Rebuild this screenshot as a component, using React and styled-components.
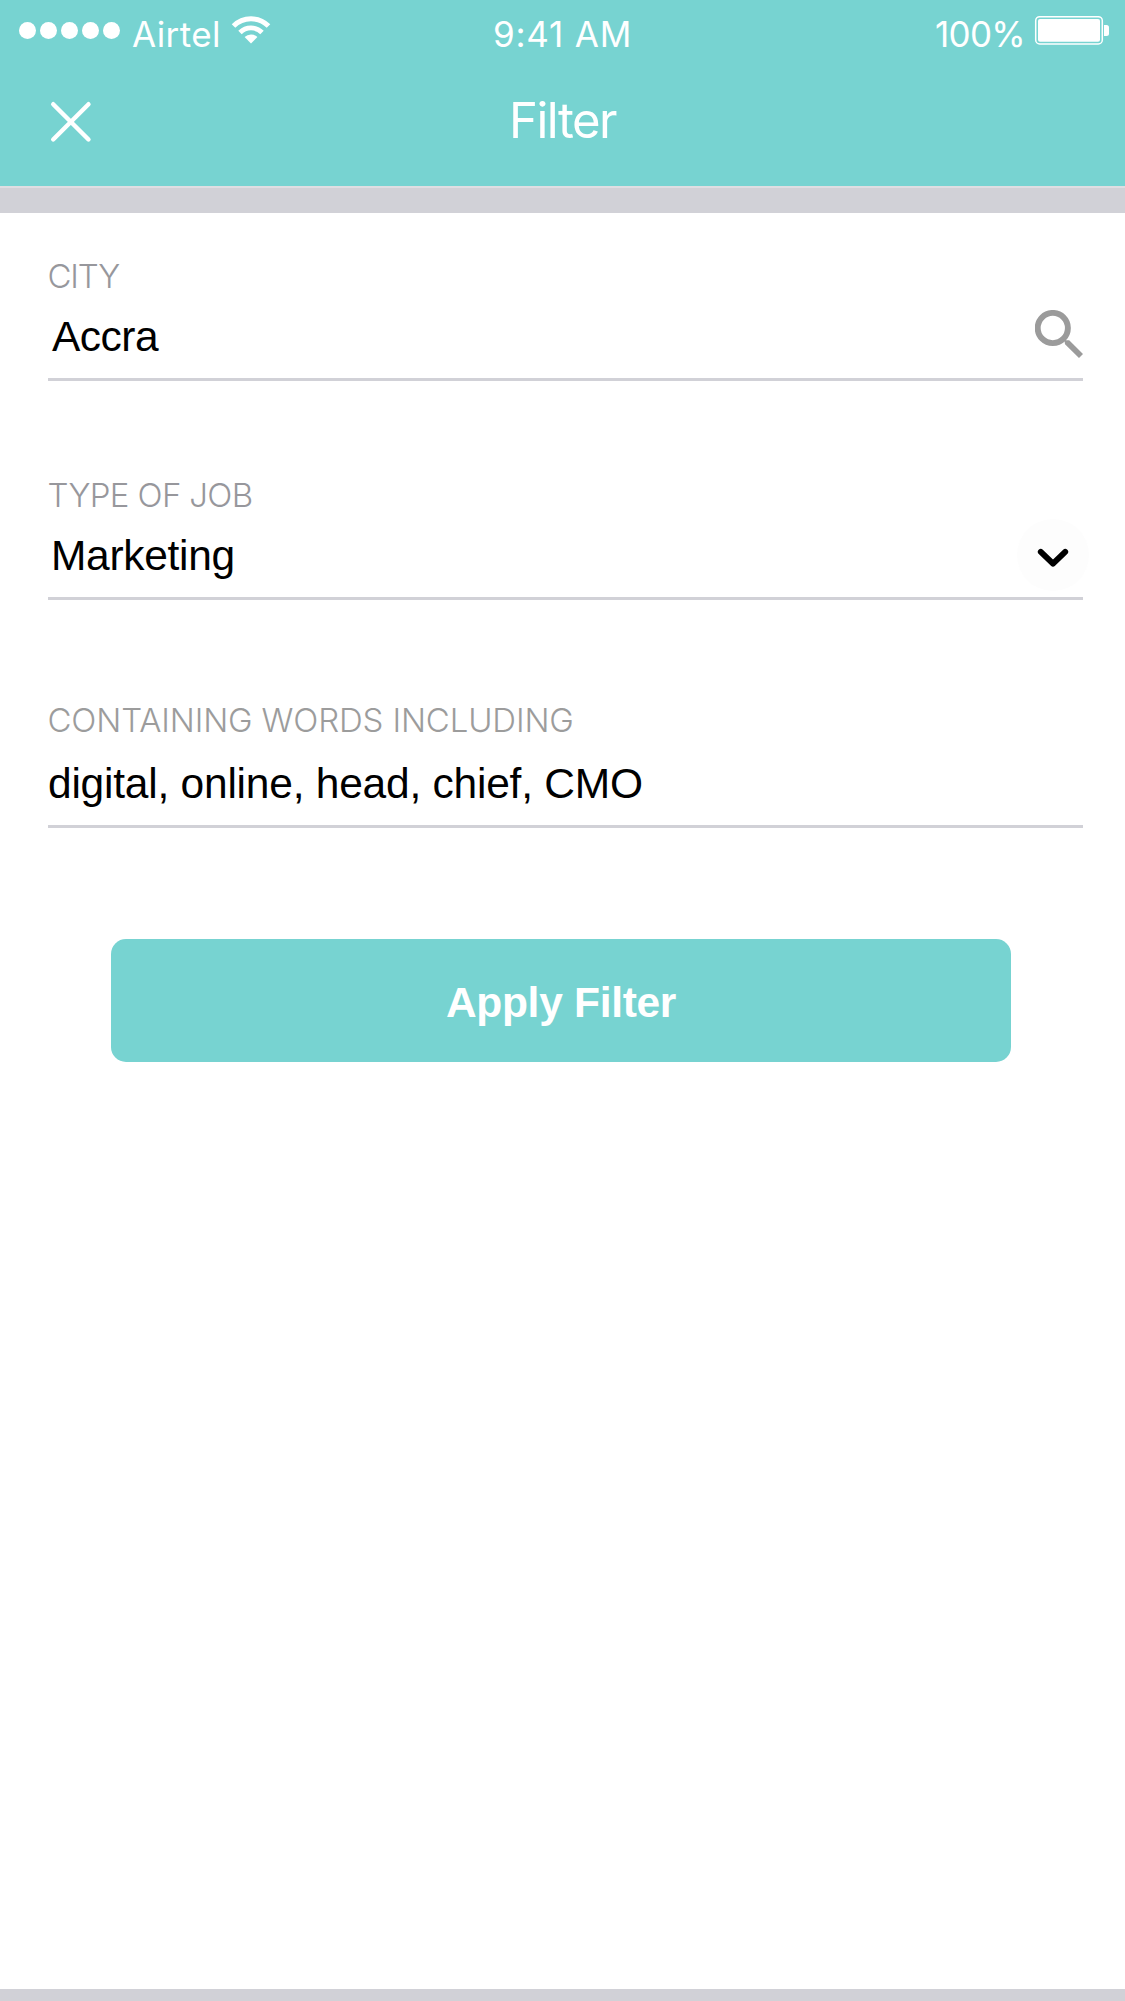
import React from "react";
import styled, { createGlobalStyle } from "styled-components";

const TEAL = "#77d3d1";
const GREY = "#d1d1d7";

const GlobalStyle = createGlobalStyle`
  * { box-sizing: border-box; }
  body { margin: 0; background: #fff; }
`;

const Screen = styled.div`
  width: 1125px;
  height: 2001px;
  display: flex;
  flex-direction: column;
  background: #fff;
  border-bottom: 12px solid ${GREY};
  overflow: hidden;
  font-family: "Liberation Sans", Arial, sans-serif;
`;

const Header = styled.header`
  height: 186px;
  flex: none;
  background: ${TEAL};
  color: #fff;
  font-family: Inter, Roboto, sans-serif;
`;

const StatusBar = styled.div`
  display: grid;
  grid-template-columns: 1fr auto 1fr;
  height: 68px;
  padding: 12px 16px 0;
`;

const StatusGroup = styled.div`
  display: flex;
  align-items: flex-start;
  justify-content: ${(p) => (p.$end ? "flex-end" : "flex-start")};
`;

const StatusText = styled.span`
  font-size: 35px;
  line-height: 44px;
  font-weight: 400;
  white-space: pre;
  letter-spacing: ${(p) => p.$spacing || 0}px;
`;

const Dots = styled.div`
  display: flex;
  gap: 4px;
  padding-top: 10px;
  margin: 0 12px 0 3px;
`;

const Dot = styled.i`
  width: 17px;
  height: 17px;
  border-radius: 50%;
  background: #fff;
`;

const WifiIcon = styled.svg`
  display: block;
  margin: 3px 0 0 10px;
`;

const BatteryIcon = styled.svg`
  display: block;
  margin: 3px 0 0 9px;
`;

const TitleBar = styled.div`
  display: grid;
  grid-template-columns: 1fr auto 1fr;
  height: 118px;
  padding: 23px 48px 0;
`;

const Title = styled.h1`
  margin: 0;
  font-size: 49px;
  line-height: 60px;
  font-weight: 400;
  letter-spacing: -1.5px;
`;

const CloseButton = styled.button`
  display: flex;
  align-items: flex-start;
  justify-content: flex-start;
  border: 0;
  background: none;
  padding: 10px 0 0 1px;
  width: 60px;
  height: 60px;
`;

const Divider = styled.div`
  height: 27px;
  flex: none;
  background: ${GREY};
  border-top: 2px solid #dedee2;
`;

const Form = styled.main`
  display: flex;
  flex-direction: column;
  padding: 43px 42px 0 48px;
`;

const Field = styled.div`
  height: ${(p) => p.$height}px;
  margin-bottom: ${(p) => p.$after}px;
  display: flex;
  flex-direction: column;
  justify-content: space-between;
  border-bottom: 3px solid ${GREY};
`;

const Label = styled.label`
  margin-left: -0.5px;
  font-family: Inter, Roboto, sans-serif;
  font-size: 33px;
  line-height: 40px;
  font-weight: 300;
  color: ${(p) => p.$color || "#97979c"};
  letter-spacing: ${(p) => p.$spacing}px;
  white-space: pre;
`;

const ValueRow = styled.div`
  display: flex;
  justify-content: space-between;
  height: 67px;
  padding-left: ${(p) => p.$indent}px;
`;

const Value = styled.span`
  padding-top: 1px;
  font-size: 42.5px;
  line-height: 50px;
  color: #000;
  letter-spacing: ${(p) => p.$spacing}px;
  white-space: pre;
`;

const SearchIcon = styled.svg`
  display: block;
  margin-top: -1px;
`;

const Chevron = styled.span`
  width: 72px;
  height: 72px;
  flex: none;
  margin: -11px -6px 0 0;
  border-radius: 50%;
  background: #fdfdfd;
  svg { display: block; }
`;

const ApplyButton = styled.button`
  width: 900px;
  height: 123px;
  margin-left: 63px;
  border: 0;
  border-radius: 15px;
  padding: 5px 0 0;
  background: ${TEAL};
  color: #fff;
  font: bold 42.5px/50px "Liberation Sans", Arial, sans-serif;
  letter-spacing: -0.3px;
`;

export default function App() {
  return (
    <Screen>
      <GlobalStyle />
      <Header>
        <StatusBar>
          <StatusGroup>
            <Dots>
              {[0, 1, 2, 3, 4].map((n) => (
                <Dot key={n} />
              ))}
            </Dots>
            <StatusText $spacing={0.4}>Airtel</StatusText>
            <WifiIcon width="40" height="30" viewBox="232 15 40 30">
              <g fill="none" stroke="#fff">
                <path d="M234.5 26A24.7 24.7 0 0 1 269.5 26" strokeWidth="5" />
                <path d="M241 32.5A15.5 15.5 0 0 1 263 32.5" strokeWidth="4.8" />
              </g>
              <path d="M252 43.5L245.6 37.1A9.1 9.1 0 0 1 258.4 37.1Z" fill="#fff" />
            </WifiIcon>
          </StatusGroup>
          <StatusText $spacing={0.8}>9:41 AM</StatusText>
          <StatusGroup $end>
            <StatusText $spacing={-0.7}>100%</StatusText>
            <BatteryIcon width="75" height="31" viewBox="1034 15 75 31">
              <rect x="1035.7" y="16.7" width="66.6" height="27.3" rx="4" fill="none" stroke="#fff" strokeWidth="1.5" />
              <rect x="1038" y="19" width="62" height="22.8" rx="2" fill="#fff" />
              <path d="M1104 25h2.5a2.5 2.5 0 0 1 2.5 2.5v6a2.5 2.5 0 0 1-2.5 2.5h-2.5z" fill="#fff" />
            </BatteryIcon>
          </StatusGroup>
        </StatusBar>
        <TitleBar>
          <CloseButton aria-label="Close">
            <svg width="44" height="44" viewBox="49 101 44 44">
              <path d="M53.2 104.2L88.5 139.5M88.5 104.2L53.2 139.5" stroke="#fff" strokeWidth="4.4" strokeLinecap="round" />
            </svg>
          </CloseButton>
          <Title>Filter</Title>
        </TitleBar>
      </Header>
      <Divider />
      <Form>
        <Field $height={125} $after={94}>
          <Label $spacing={-1.2}>CITY</Label>
          <ValueRow $indent={4}>
            <Value $spacing={-0.5}>Accra</Value>
            <SearchIcon width="48" height="48" viewBox="0 0 48 48">
              <circle cx="17.8" cy="18" r="15.1" fill="none" stroke="#9b9b9b" strokeWidth="5.9" />
              <path d="M28.5 29L31 30.2L34.2 30.2L48 44L44 48L30 34.2L29.6 31.6Z" fill="#9b9b9b" />
            </SearchIcon>
          </ValueRow>
        </Field>
        <Field $height={125} $after={100}>
          <Label $spacing={-0.65}>TYPE OF JOB</Label>
          <ValueRow $indent={3}>
            <Value $spacing={-0.3}>Marketing</Value>
            <Chevron>
              <svg width="72" height="72" viewBox="1017 519 72 72">
                <path d="M1040.8 551.8L1053 563.6L1065.2 551.8" fill="none" stroke="#000" strokeWidth="5.9" strokeLinecap="round" strokeLinejoin="round" />
              </svg>
            </Chevron>
          </ValueRow>
        </Field>
        <Field $height={128} $after={111}>
          <Label $spacing={-0.15} $color="#9c9c9c">CONTAINING WORDS INCLUDING</Label>
          <ValueRow $indent={-1}>
            <Value $spacing={-0.23}>digital, online, head, chief, CMO</Value>
          </ValueRow>
        </Field>
        <ApplyButton>Apply Filter</ApplyButton>
      </Form>
    </Screen>
  );
}
